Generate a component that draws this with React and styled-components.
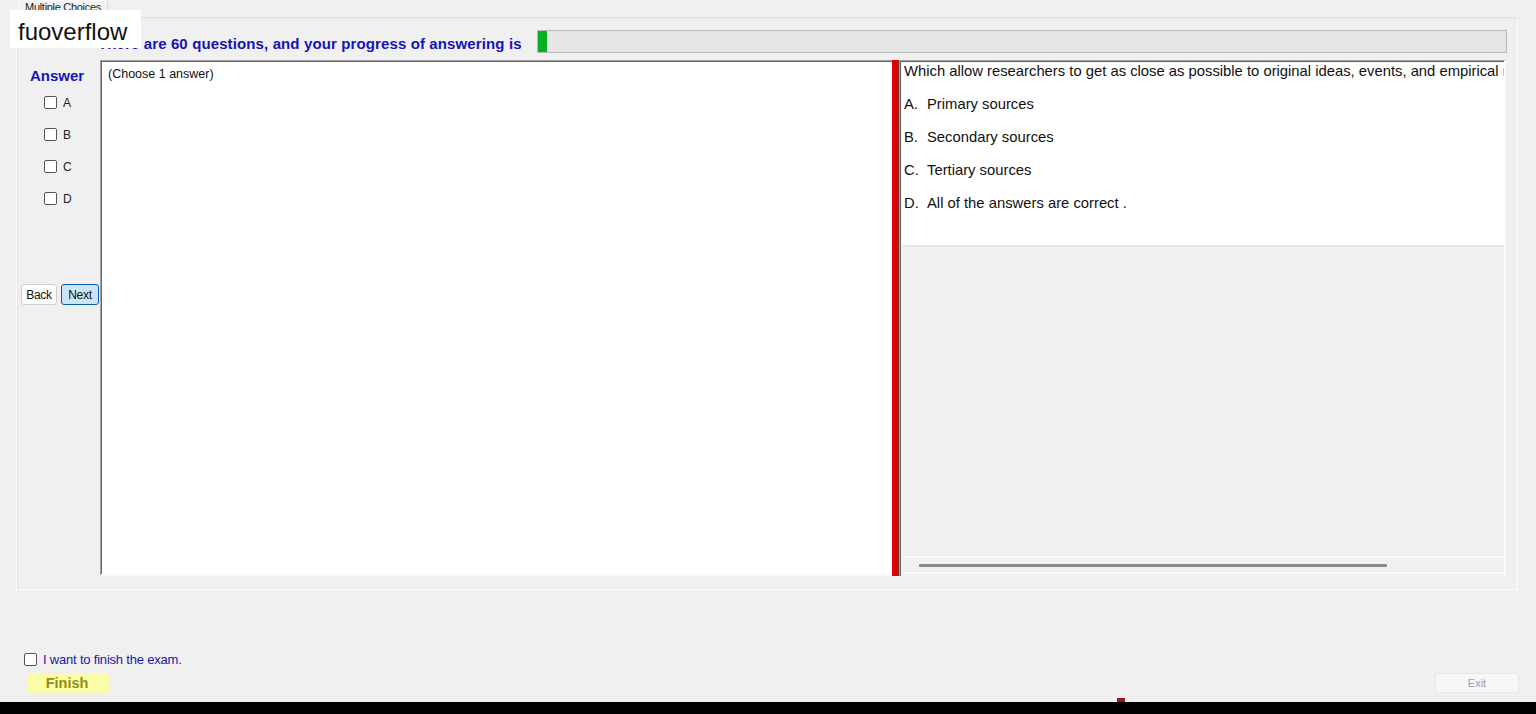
import React from 'react';
import styled, { createGlobalStyle } from 'styled-components';

const GlobalStyle = createGlobalStyle`
  html, body {
    margin: 0;
    padding: 0;
    background: #f0f0f0;
    font-family: "Liberation Sans", Arial, sans-serif;
  }
`;

const Root = styled.div`
  position: relative;
  width: 1536px;
  height: 714px;
  display: flex;
  flex-direction: column;
  overflow: hidden;
  background: #f0f0f0;
`;

const TabStrip = styled.div`
  height: 17px;
  display: flex;
  padding-left: 18px;
`;

const Tab = styled.div`
  width: 90px;
  height: 16px;
  font-size: 11px;
  line-height: 13px;
  color: #222;
  text-align: center;
  border: 1px solid #fafafa;
  border-bottom: none;
  border-right-color: #d9d9d9;
  box-sizing: border-box;
  background: #f3f3f3;
  letter-spacing: -0.3px;
`;

const TabPage = styled.div`
  margin-left: 16px;
  width: 1502px;
  height: 573px;
  box-sizing: border-box;
  border: 1px solid #fbfbfb;
  border-top-color: #e4e4e4;
  box-shadow: inset 1px 1px 0 #e6e6e6;
  display: flex;
  flex-direction: column;
`;

const HeaderRow = styled.div`
  display: flex;
  align-items: flex-end;
  height: 35px;
  padding-left: 81px;
  padding-right: 10px;
`;

const Title = styled.div`
  font-size: 15px;
  font-weight: bold;
  color: #1515b0;
  line-height: 17px;
  margin-bottom: 1px;
  letter-spacing: 0.12px;
  white-space: nowrap;
`;

const Progress = styled.div`
  flex: 1;
  height: 23px;
  margin-left: 15px;
  box-sizing: border-box;
  border: 1px solid #bcbcbc;
  background: #e6e6e6;
  display: flex;
`;

const ProgressFill = styled.div`
  height: 100%;
  background: #06b025;
`;

const ContentRow = styled.div`
  margin-top: 7px;
  height: 516px;
  display: flex;
`;

const Sidebar = styled.div`
  width: 83px;
  display: flex;
  flex-direction: column;
  align-items: center;
`;

const AnswerLabel = styled.div`
  margin-top: 8px;
  font-size: 15px;
  font-weight: bold;
  color: #1515b0;
  line-height: 16px;
  padding-right: 3px;
`;

const ChoiceList = styled.div`
  display: flex;
  flex-direction: column;
  gap: 19px;
  margin-top: 12px;
  align-self: flex-start;
  padding-left: 27px;
`;

const Choice = styled.label`
  display: flex;
  align-items: center;
  gap: 6px;
  height: 13px;
  font-size: 12px;
  color: #222;
`;

const Box = styled.span`
  width: 13px;
  height: 13px;
  box-sizing: border-box;
  border: 1px solid #555;
  border-radius: 2px;
  background: #fff;
  flex-shrink: 0;
`;

const NavRow = styled.div`
  margin-top: 79px;
  display: flex;
  gap: 4px;
  padding-left: 4px;
  align-self: flex-start;
`;

const NavButton = styled.button`
  width: ${(p) => p.$w}px;
  height: 21px;
  padding: 0;
  font-family: inherit;
  font-size: 12px;
  color: #111;
  letter-spacing: -0.3px;
  border-radius: 3px;
  box-sizing: border-box;
  border: 1px solid ${(p) => (p.$active ? '#0a5fa6' : '#d0d0d0')};
  background: ${(p) => (p.$active ? '#cce4f7' : '#fdfdfd')};
`;

const Editor = styled.div`
  width: 792px;
  box-sizing: border-box;
  background: #fff;
  border-top: 1px solid #a0a0a0;
  border-left: 1px solid #a0a0a0;
  border-bottom: 2px solid #f8f8f8;
  box-shadow: inset 1px 1px 0 #696969;
  padding: 6px 7px;
  font-size: 12.5px;
  color: #111;
`;

const Splitter = styled.div`
  width: 6px;
  background: #e00000;
  border-right: 1px solid #7a3030;
`;

const QuestionPane = styled.div`
  width: 607px;
  display: flex;
  flex-direction: column;
  box-sizing: border-box;
  border-top: 1px solid #a0a0a0;
  border-left: 1px solid #a0a0a0;
  border-right: 2px solid #fbfbfb;
  box-shadow: inset 1px 1px 0 #696969;
  padding: 2px 0 2px 2px;
`;

const RichBox = styled.div`
  height: 182px;
  background: #fff;
  border-bottom: 2px solid #e6e6e6;
  overflow: hidden;
  padding: 0 0 0 2px;
  font-size: 14.8px;
  color: #111;
`;

const QuestionLine = styled.div`
  height: 33px;
  line-height: 17px;
  white-space: nowrap;
`;

const OptionKey = styled.span`
  display: inline-block;
  width: 23px;
`;

const Filler = styled.div`
  flex: 1;
  border-bottom: 2px solid #fafafa;
`;

const ScrollBar = styled.div`
  height: 14px;
  display: flex;
  align-items: center;
  padding-left: 17px;
  border-bottom: 2px solid #fafafa;
`;

const ScrollThumb = styled.div`
  width: 468px;
  height: 3px;
  background: #8a8a8a;
  border-radius: 1px;
`;

const BottomArea = styled.div`
  margin-top: 62px;
  display: flex;
  flex-direction: column;
`;

const FinishCheck = styled.label`
  display: flex;
  align-items: center;
  gap: 6px;
  padding-left: 24px;
  height: 14px;
  font-size: 13px;
  color: #1a1aa0;
  letter-spacing: -0.2px;
`;

const ButtonsRow = styled.div`
  margin-top: 7px;
  display: flex;
  justify-content: space-between;
  align-items: flex-start;
  padding: 0 17px 0 27px;
`;

const FinishButton = styled.button`
  width: 82px;
  height: 20px;
  padding: 0 2px 0 0;
  border: none;
  border-radius: 2px;
  background: #fbfba8;
  font-family: inherit;
  font-size: 14.5px;
  font-weight: bold;
  color: #8f8f10;
  text-align: center;
`;

const ExitButton = styled.button`
  width: 84px;
  height: 20px;
  padding: 0;
  border: 1px solid #e8e8e8;
  border-radius: 2px;
  background: #f7f7f7;
  font-family: inherit;
  font-size: 11px;
  color: #a0a0a0;
`;

const Taskbar = styled.div`
  position: relative;
  margin-top: auto;
  height: 12px;
  background: #000;
`;

const TaskMark = styled.div`
  position: absolute;
  left: 1117px;
  top: -4px;
  width: 8px;
  height: 4px;
  background: #9a1a1a;
`;

const Watermark = styled.div`
  position: absolute;
  left: 10px;
  top: 10px;
  width: 131px;
  height: 38px;
  background: #fff;
  font-size: 24px;
  line-height: 34px;
  padding: 5px 0 0 8px;
  box-sizing: border-box;
  color: #111;
`;

const choices = ['A', 'B', 'C', 'D'];

const options = [
  ['A.', 'Primary sources'],
  ['B.', 'Secondary sources'],
  ['C.', 'Tertiary sources'],
  ['D.', 'All of the answers are correct .'],
];

const App = () => {
  const answered = 1;
  const total = 60;
  return (
    <Root>
      <GlobalStyle />
      <TabStrip>
        <Tab>Multiple Choices</Tab>
      </TabStrip>
      <TabPage>
        <HeaderRow>
          <Title>There are {total} questions, and your progress of answering is</Title>
          <Progress>
            <ProgressFill style={{ width: `${Math.max(1, answered / total)}%` }} />
          </Progress>
        </HeaderRow>
        <ContentRow>
          <Sidebar>
            <AnswerLabel>Answer</AnswerLabel>
            <ChoiceList>
              {choices.map((c) => (
                <Choice key={c}>
                  <Box />
                  {c}
                </Choice>
              ))}
            </ChoiceList>
            <NavRow>
              <NavButton $w={36}>Back</NavButton>
              <NavButton $w={38} $active>
                Next
              </NavButton>
            </NavRow>
          </Sidebar>
          <Editor>(Choose 1 answer)</Editor>
          <Splitter />
          <QuestionPane>
            <RichBox>
              <QuestionLine>
                Which allow researchers to get as close as possible to original ideas, events, and empirical research
              </QuestionLine>
              {options.map(([k, t]) => (
                <QuestionLine key={k}>
                  <OptionKey>{k}</OptionKey>
                  {t}
                </QuestionLine>
              ))}
            </RichBox>
            <Filler />
            <ScrollBar>
              <ScrollThumb />
            </ScrollBar>
          </QuestionPane>
        </ContentRow>
      </TabPage>
      <BottomArea>
        <FinishCheck>
          <Box />I want to finish the exam.
        </FinishCheck>
        <ButtonsRow>
          <FinishButton>Finish</FinishButton>
          <ExitButton>Exit</ExitButton>
        </ButtonsRow>
      </BottomArea>
      <Taskbar>
        <TaskMark />
      </Taskbar>
      <Watermark>fuoverflow</Watermark>
    </Root>
  );
};

export default App;
